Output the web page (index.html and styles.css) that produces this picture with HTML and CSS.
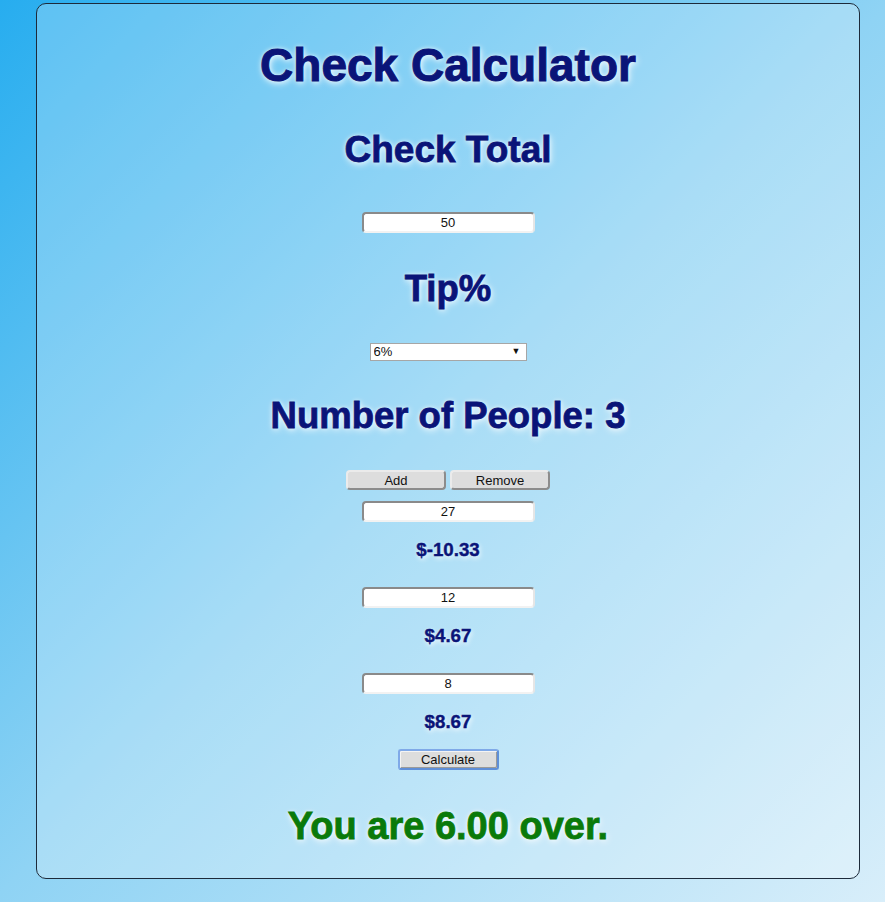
FILE: index.html
```html
<!DOCTYPE html>
<html>
<head>
<meta charset="utf-8">
<title>Check Calculator</title>
<link rel="stylesheet" href="styles.css">
</head>
<body>
<div class="card">
  <h1 class="title">Check Calculator</h1>
  <h2 class="heading h-total">Check Total</h2>
  <input class="field f-total" type="text" value="50">
  <h2 class="heading h-tip">Tip%</h2>
  <div class="select-row">
    <span class="select-wrap">
      <select class="select">
        <option>6%</option>
      </select>
    </span>
  </div>
  <h2 class="heading h-people">Number of People: 3</h2>
  <div class="btn-row">
    <button class="btn">Add</button>
    <button class="btn">Remove</button>
  </div>
  <input class="field f-person first" type="text" value="27">
  <h3 class="amount">$-10.33</h3>
  <input class="field f-person" type="text" value="12">
  <h3 class="amount">$4.67</h3>
  <input class="field f-person" type="text" value="8">
  <h3 class="amount">$8.67</h3>
  <div class="calc-row">
    <button class="btn btn-calc">Calculate</button>
  </div>
  <h2 class="result">You are 6.00 over.</h2>
</div>
</body>
</html>
```

FILE: styles.css
```css
html, body {
  margin: 0;
  padding: 0;
}
body {
  min-height: 902px;
  background: linear-gradient(135deg, #27adef 0%, #8fd3f4 50%, #d8eefa 100%);
  font-family: "Liberation Sans", Arial, sans-serif;
  padding-top: 3px;
  box-sizing: border-box;
}
.card {
  margin-left: 36px;
  width: 822px;
  border: 1px solid #1d2a3a;
  border-radius: 10px;
  background: rgba(255, 255, 255, 0.24);
  text-align: center;
  padding: 34px 0 31px;
  display: flex;
  flex-direction: column;
  align-items: center;
}
.title {
  margin: 0;
  font-size: 46px;
  line-height: 54px;
  font-weight: bold;
  color: #0a1478;
  -webkit-text-stroke: 1px #0a1478;
  text-shadow: 1px 2px 7px rgba(255, 255, 255, 0.95), 0 0 4px rgba(255, 255, 255, 0.6);
}
.heading, .result {
  margin: 0;
  font-size: 37px;
  line-height: 42px;
  font-weight: bold;
  color: #0a1478;
  -webkit-text-stroke: 0.8px #0a1478;
  text-shadow: 1px 2px 7px rgba(255, 255, 255, 0.95), 0 0 4px rgba(255, 255, 255, 0.6);
}
.h-total { margin-top: 37px; }
.h-tip { margin-top: 35px; }
.h-people { margin-top: 35px; }
.heading.h-tip, .heading.h-people { font-size: 36.5px; }
.result {
  margin-top: 35px;
  font-size: 38px;
  color: #0a7a0a;
  -webkit-text-stroke: 0.8px #0a7a0a;
}
.field {
  box-sizing: border-box;
  width: 173px;
  height: 21px;
  margin: 0;
  padding: 0 4px;
  border: 2px solid;
  border-color: #8a8a8a #e6e6e6 #f2f2f2 #8a8a8a;
  border-radius: 4px;
  background: #fff;
  text-align: center;
  font-family: "Liberation Sans", Arial, sans-serif;
  font-size: 13px;
  color: #111;
  outline: none;
}
.f-total { margin-top: 41px; }
.f-person { margin-top: 26px; }
.f-person.first { margin-top: 11px; }
.select-row {
  margin-top: 32px;
  display: flex;
  justify-content: center;
}
.select-wrap {
  position: relative;
  display: block;
  width: 157px;
  height: 18px;
}
.select {
  appearance: none;
  -webkit-appearance: none;
  box-sizing: border-box;
  width: 157px;
  height: 18px;
  margin: 0;
  padding: 0 0 0 3px;
  border: 1px solid #a6a6a6;
  border-radius: 0;
  background: #fff;
  font-family: "Liberation Sans", Arial, sans-serif;
  font-size: 13px;
  line-height: 16px;
  color: #111;
}
.select-wrap::after {
  content: "▼";
  position: absolute;
  right: 6px;
  top: 3px;
  font-size: 9px;
  line-height: 12px;
  color: #111;
  pointer-events: none;
}
.btn-row {
  margin-top: 33px;
  display: flex;
  gap: 4px;
}
.btn {
  box-sizing: border-box;
  width: 100px;
  height: 20px;
  margin: 0;
  padding: 0;
  border: 2px solid;
  border-color: #ebebeb #8c8c8c #8c8c8c #ebebeb;
  border-radius: 4px;
  background: #dddddd;
  font-family: "Liberation Sans", Arial, sans-serif;
  font-size: 13px;
  color: #111;
}
.amount {
  margin: 17px 0 0;
  font-size: 18.72px;
  line-height: 22px;
  font-weight: bold;
  color: #0a1478;
  -webkit-text-stroke: 0.4px #0a1478;
  text-shadow: 1px 2px 5px rgba(255, 255, 255, 0.95);
}
.calc-row {
  margin-top: 16px;
  display: flex;
  justify-content: center;
}
.btn-calc {
  width: 101px;
  height: 21px;
  border: 2px solid;
  border-color: #7fa9e8 #5f8fd8 #5f8fd8 #7fa9e8;
  border-radius: 3px;
  box-shadow: inset 1px 1px 0 #f4f4f4, inset -1px -1px 0 #9a9a9a;
}
```
